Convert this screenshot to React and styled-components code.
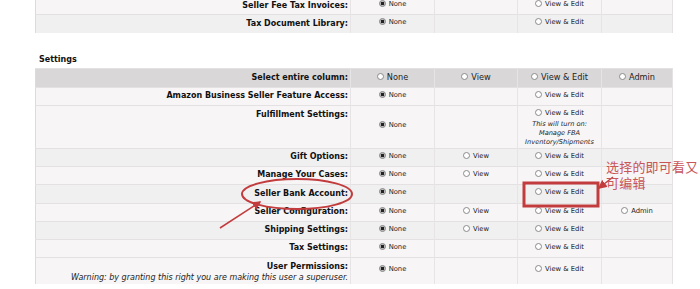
import React from 'react';
import styled, { createGlobalStyle } from 'styled-components';

const GlobalStyle = createGlobalStyle`
  html, body {
    margin: 0;
    background: #fff;
    font-family: "DejaVu Sans", Verdana, sans-serif;
    color: #111;
  }
`;

const Page = styled.div`
  position: relative;
  width: 700px;
  height: 289px;
  overflow: hidden;
  padding-left: 35px;
  box-sizing: border-box;
`;

const Table = styled.table`
  width: 637px;
  border-collapse: collapse;
  table-layout: fixed;
  margin-top: ${(p) => p.$offset || 0}px;
  border-left: 1px solid #dcdadb;
  border-right: 1px solid #e4e2e3;
`;

const Row = styled.tr`
  height: ${(p) => p.$h || 18}px;
  background: ${(p) => (p.$head ? '#d9d7d8' : p.$alt ? '#f1f0f1' : '#f7f5f6')};
`;

const Label = styled.td`
  padding: ${(p) => (p.$top ? '4px 2px 0 0' : '0 2px 0 0')};
  vertical-align: ${(p) => (p.$top ? 'top' : 'middle')};
  text-align: right;
  font-weight: bold;
  font-size: 8px;
  line-height: 10px;
  white-space: nowrap;
  border-top: 1px solid #e3e1e2;
`;

const Warning = styled.div`
  font-weight: normal;
  font-style: italic;
  font-size: 8px;
  line-height: 11px;
  color: #222;
`;

const Cell = styled.td`
  padding: ${(p) => (p.$top ? '3px 0 0' : '0')};
  vertical-align: ${(p) => (p.$top ? 'top' : 'middle')};
  text-align: center;
  font-size: ${(p) => (p.$head ? 8.2 : 6.8)}px;
  line-height: 9px;
  white-space: nowrap;
  border-top: 1px solid #e3e1e2;
  border-left: 1px solid #e6e4e5;
  color: #222;
`;

const Option = styled.span`
  display: inline-flex;
  align-items: center;
  gap: 3px;
`;

const Dot = styled.span`
  display: inline-block;
  width: 5px;
  height: 5px;
  border-radius: 50%;
  border: 1px solid #8a8a8a;
  background: ${(p) =>
    p.$on ? 'radial-gradient(circle, #222 0 1.6px, #bbb 2px)' : '#fff'};
  position: relative;
  top: -1px;
`;

const Note = styled.div`
  font-style: italic;
  font-size: 6.6px;
  line-height: 9px;
  color: #222;
`;

const Heading = styled.div`
  font-weight: bold;
  font-size: 8px;
  line-height: 12px;
  padding: 21px 0 2px 4px;
`;

const Overlay = styled.svg`
  position: absolute;
  left: 0;
  top: 0;
  pointer-events: none;
`;

const Callout = styled.div`
  position: absolute;
  left: 606px;
  top: 159px;
  width: 95px;
  font-family: "Noto Sans CJK SC", sans-serif;
  font-size: 13px;
  line-height: 16px;
  color: #c85558;
  letter-spacing: 0.2px;
`;

const Radio = ({ on, children }) => (
  <Option>
    <Dot $on={on} />
    {children}
  </Option>
);

const Cols = () => (
  <colgroup>
    <col style={{ width: 315 }} />
    <col style={{ width: 84 }} />
    <col style={{ width: 83 }} />
    <col style={{ width: 84 }} />
    <col style={{ width: 71 }} />
  </colgroup>
);

const settings = [
  { label: 'Amazon Business Seller Feature Access:', view: false, admin: false },
  { label: 'Fulfillment Settings:', view: false, admin: false, fba: true, h: 43 },
  { label: 'Gift Options:', view: true, admin: false, alt: true },
  { label: 'Manage Your Cases:', view: true, admin: false },
  { label: 'Seller Bank Account:', view: false, admin: false, alt: true, h: 19 },
  { label: 'Seller Configuration:', view: true, admin: true },
  { label: 'Shipping Settings:', view: true, admin: false, alt: true },
  { label: 'Tax Settings:', view: false, admin: false },
  { label: 'User Permissions:', view: false, admin: false, warn: true, h: 27 },
];

const App = () => (
  <Page>
    <GlobalStyle />
    <Table $offset={-4}>
      <Cols />
      <tbody>
        {['Seller Fee Tax Invoices:', 'Tax Document Library:'].map((l, i) => (
          <Row key={l} $alt={i === 1} $h={18}>
            <Label>{l}</Label>
            <Cell><Radio on>None</Radio></Cell>
            <Cell />
            <Cell><Radio>View &amp; Edit</Radio></Cell>
            <Cell />
          </Row>
        ))}
      </tbody>
    </Table>

    <Heading>Settings</Heading>

    <Table>
      <Cols />
      <tbody>
        <Row $head $h={19}>
          <Label>Select entire column:</Label>
          <Cell $head><Radio>None</Radio></Cell>
          <Cell $head><Radio>View</Radio></Cell>
          <Cell $head><Radio>View &amp; Edit</Radio></Cell>
          <Cell $head><Radio>Admin</Radio></Cell>
        </Row>
        {settings.map((s) => (
          <Row key={s.label} $alt={s.alt} $h={s.h || 18}>
            <Label $top={s.fba || s.warn}>
              {s.label}
              {s.warn && (
                <Warning>Warning: by granting this right you are making this user a superuser.</Warning>
              )}
            </Label>
            <Cell><Radio on>None</Radio></Cell>
            <Cell>{s.view && <Radio>View</Radio>}</Cell>
            <Cell $top={s.fba}>
              <Radio>View &amp; Edit</Radio>
              {s.fba && (
                <Note>
                  This will turn on:
                  <br />
                  Manage FBA
                  <br />
                  Inventory/Shipments
                </Note>
              )}
            </Cell>
            <Cell>{s.admin && <Radio>Admin</Radio>}</Cell>
          </Row>
        ))}
      </tbody>
    </Table>

    <Overlay width="700" height="289" viewBox="0 0 700 289">
      <defs>
        <marker id="head" markerWidth="6" markerHeight="6" refX="5" refY="3" orient="auto">
          <path d="M0,0 L6,3 L0,6 Z" fill="#c23c3e" />
        </marker>
      </defs>
      <ellipse cx="297" cy="194" rx="55" ry="15" fill="none" stroke="#c23c3e" strokeWidth="2" />
      <line x1="220" y1="228" x2="260" y2="202" stroke="#c23c3e" strokeWidth="1.5" markerEnd="url(#head)" />
      <rect x="524" y="183" width="74" height="23" fill="none" stroke="#c23c3e" strokeWidth="3" />
      <line x1="613" y1="177" x2="599" y2="188" stroke="#c23c3e" strokeWidth="1.5" markerEnd="url(#head)" />
    </Overlay>
    <Callout>选择的即可看又可编辑</Callout>
  </Page>
);

export default App;
